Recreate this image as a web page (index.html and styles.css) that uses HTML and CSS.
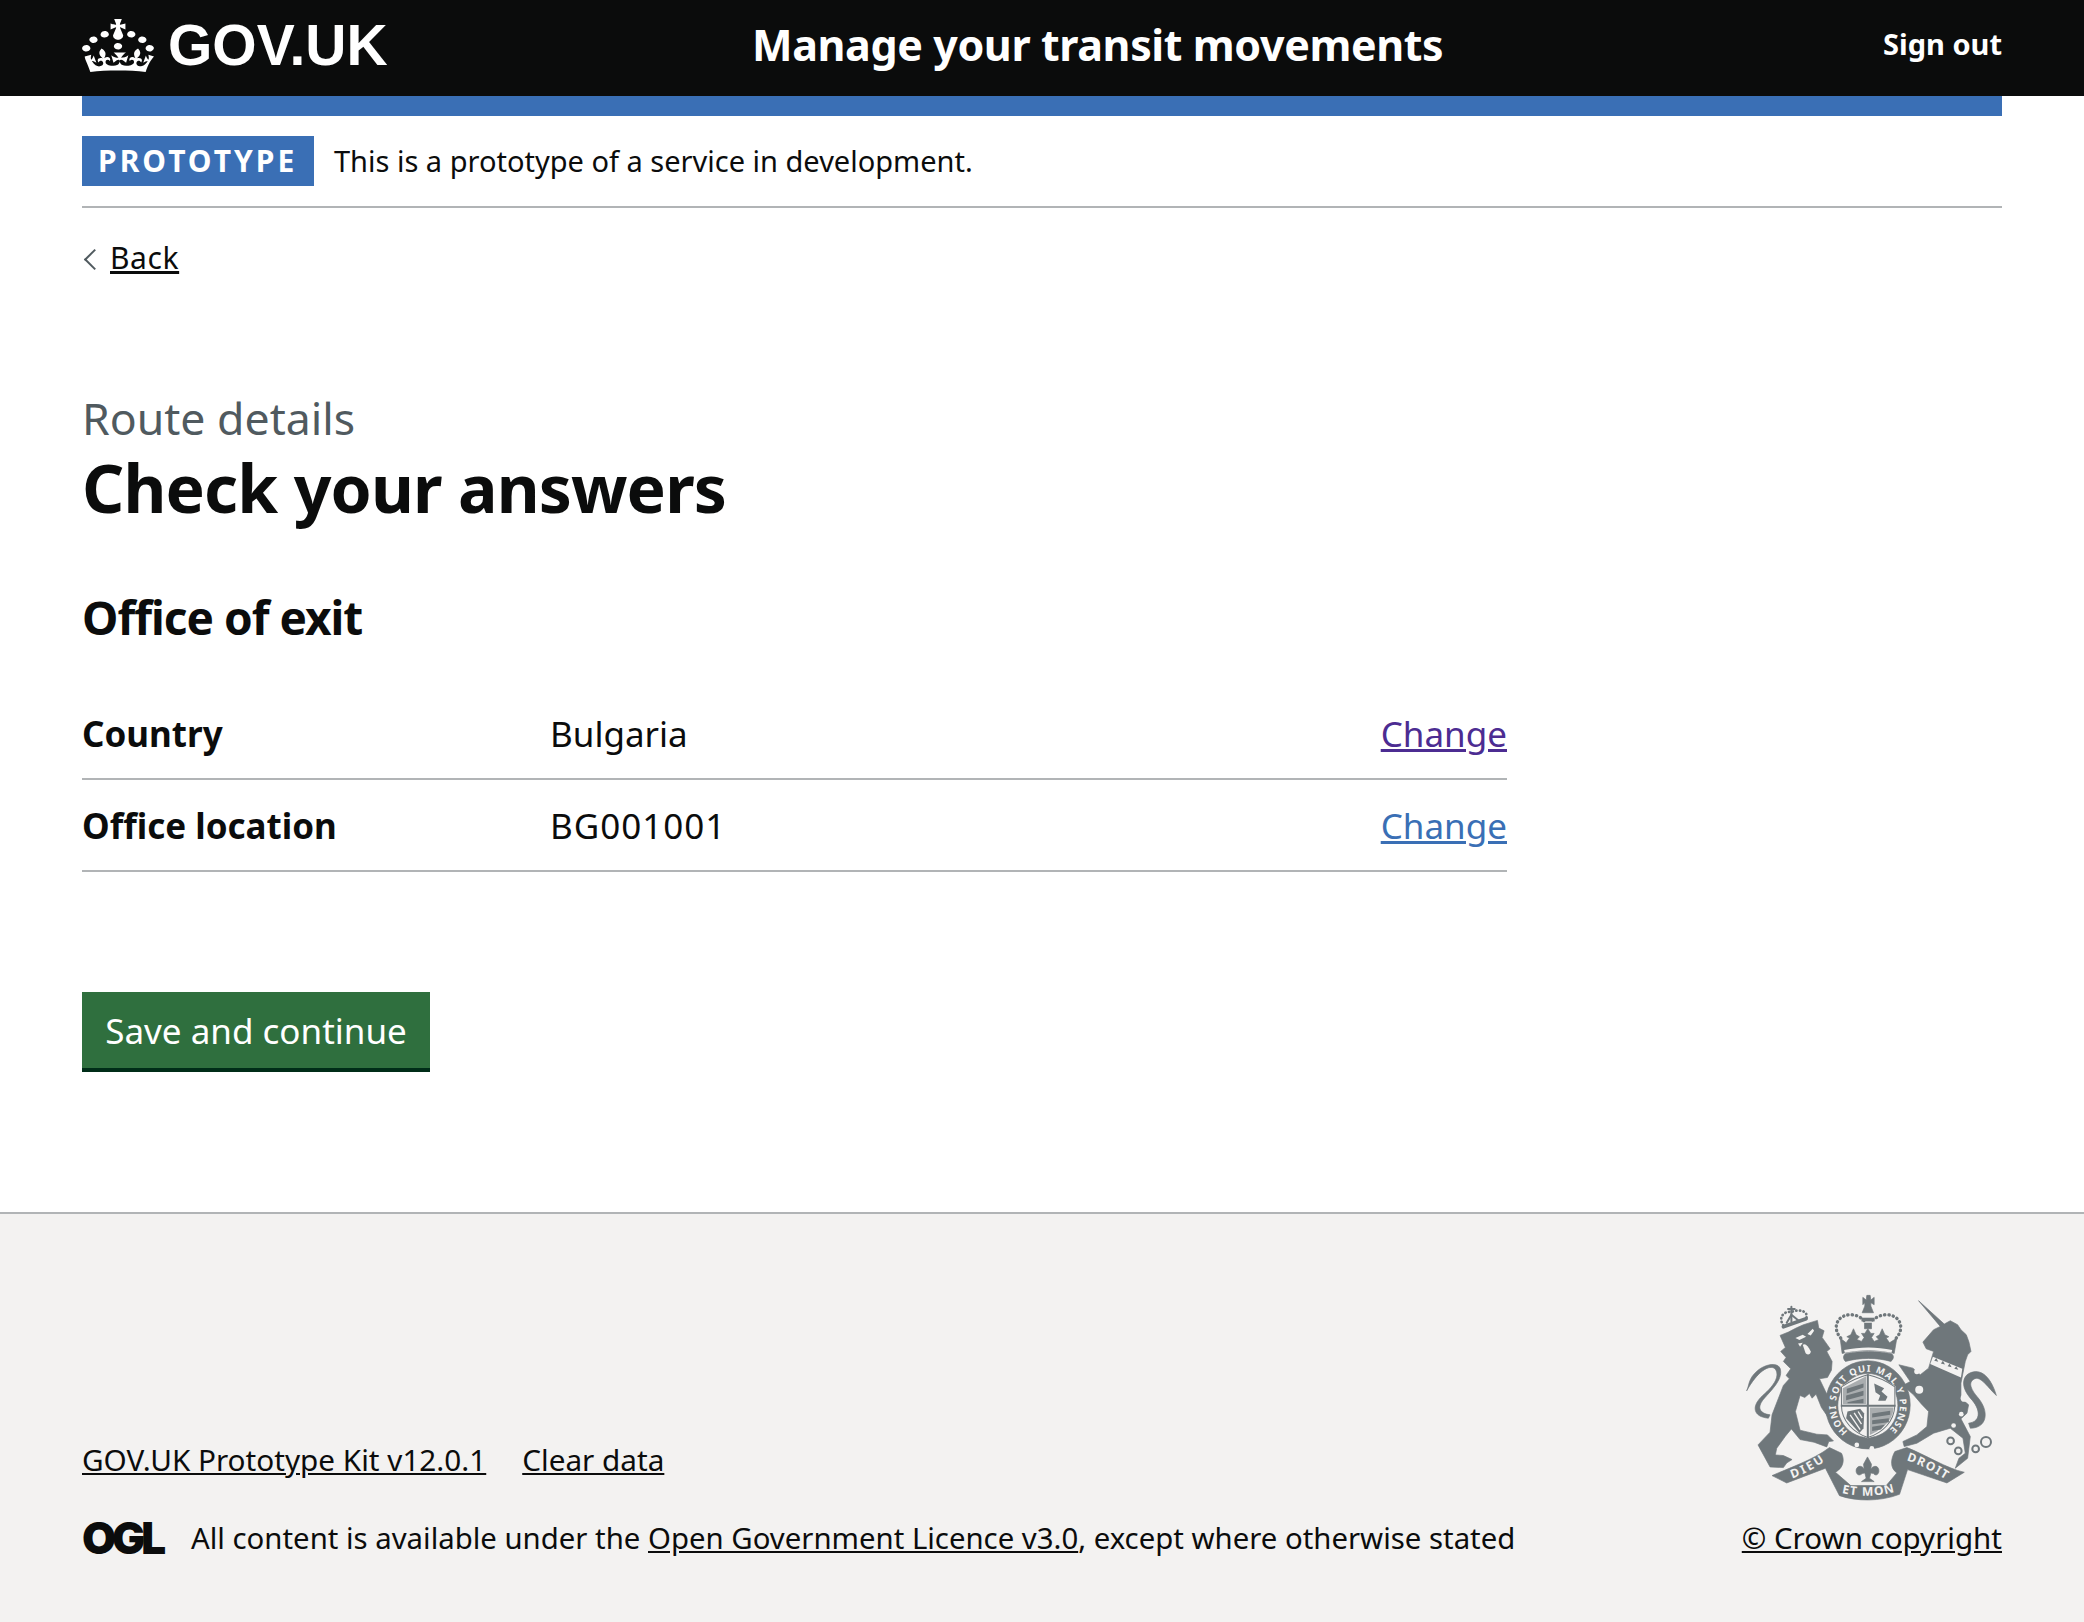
FILE: index.html
```html
<!DOCTYPE html>
<html lang="en">
<head>
<meta charset="utf-8">
<title>Check your answers</title>
<link rel="stylesheet" href="styles.css">
</head>
<body>
<header class="site-header">
  <a class="logo" href="#">
    <svg class="crown" viewBox="0 0 32 30" preserveAspectRatio="none" aria-hidden="true"><path fill="currentColor" fill-rule="evenodd" d="M22.6 10.4c-1 .4-2-.1-2.4-1-.4-.9.1-2 1-2.4.9-.4 2 .1 2.4 1s-.1 2-1 2.4m-5.9 6.7c-.9.4-2-.1-2.4-1-.4-.9.1-2 1-2.4.9-.4 2 .1 2.4 1s-.1 2-1 2.4m10.8-3.7c-1 .4-2-.1-2.4-1-.4-.9.1-2 1-2.4.9-.4 2 .1 2.4 1s0 2-1 2.4m3.3 4.8c-1 .4-2-.1-2.4-1-.4-.9.1-2 1-2.4.9-.4 2 .1 2.4 1s-.1 2-1 2.4M17 4.7l2.3 1.2V2.5l-2.3.7-.2-.2.9-3h-3.4l.9 3-.2.2c-.1.1-2.3-.7-2.3-.7v3.4L15 4.7c.1.1.1.2.2.2l-1.3 4c-.1.2-.1.4-.1.6 0 1.1.8 2 1.9 2.2h.7c1-.2 1.9-1.1 1.9-2.2 0-.2 0-.4-.1-.6l-1.3-4c-.1-.1 0-.2.1-.2m-7.6 5.7c.9.4 2-.1 2.4-1 .4-.9-.1-2-1-2.4-.9-.4-2 .1-2.4 1s0 2 1 2.4m-5 3c.9.4 2-.1 2.4-1 .4-.9-.1-2-1-2.4-.9-.4-2 .1-2.4 1s.1 2 1 2.4m-3.2 4.8c.9.4 2-.1 2.4-1 .4-.9-.1-2-1-2.4-.9-.4-2 .1-2.4 1s0 2 1 2.4m14.8 11c4.4 0 8.6.3 12.3.8 1.1-4.5 2.4-7 3.7-8.8l-2.5-.9c.2 1.3.3 1.9 0 2.7-.4-.4-.8-1.1-1.1-2.3l-1.2 4c.7-.5 1.3-.8 2-.9-1.1 2.5-2.6 3.1-3.5 3-1.1-.2-1.7-1.2-1.5-2.1.3-1.2 1.5-1.5 2.1-.1 1.1-2.3-.8-3-2-2.3 1.9-1.9 2.1-3.5.6-5.6-2.1 1.6-2.1 3.2-1.2 5.5-1.2-1.4-3.2-.6-2.5 1.6.9-1.4 2.1-.5 1.9.8-.2 1.1-1.7 2.1-3.5 1.9-2.7-.2-2.9-2.1-2.9-3.6.7-.1 1.9.5 2.9 1.9l1-4.3c-1.1 1.1-2.1 1.4-3.2 1.4.4-1.2 2.1-3 2.1-3h-5.4s1.7 1.9 2.1 3c-1.1 0-2.1-.2-3.2-1.4l1 4.3c1-1.4 2.2-2 2.9-1.9-.1 1.5-.2 3.4-2.9 3.6-1.9.2-3.4-.8-3.5-1.9-.2-1.3 1-2.2 1.9-.8.7-2.3-1.2-3-2.5-1.6.9-2.2.9-3.9-1.2-5.5-1.5 2-1.3 3.7.6 5.6-1.2-.7-3.1 0-2 2.3.6-1.4 1.8-1.1 2.1.1.2.9-.3 1.9-1.5 2.1-.9.2-2.4-.5-3.5-3 .6 0 1.2.3 2 .9l-1.2-4c-.3 1.1-.7 1.9-1.1 2.3-.3-.8-.2-1.4 0-2.7l-2.9.9C1.3 23 2.6 25.5 3.7 30c3.7-.5 7.9-.8 12.3-.8"/></svg>
    <span class="logo-text">GOV.UK</span>
  </a>
  <a class="service-name" href="#">Manage your transit movements</a>
  <a class="sign-out" href="#">Sign out</a>
</header>
<div class="wrap">
  <div class="blue-bar"></div>
  <div class="phase">
    <strong class="tag">PROTOTYPE</strong>
    <span class="phase-text">This is a prototype of a service in development.</span>
  </div>
  <a class="back" href="#">Back</a>
  <main class="main">
    <span class="caption">Route details</span>
    <h1 class="title">Check your answers</h1>
    <h2 class="subtitle">Office of exit</h2>
    <dl class="summary">
      <div class="row">
        <dt class="key">Country</dt>
        <dd class="value">Bulgaria</dd>
        <dd class="action"><a class="visited" href="#">Change</a></dd>
      </div>
      <div class="row">
        <dt class="key">Office location</dt>
        <dd class="value value-code">BG001001</dd>
        <dd class="action"><a class="link" href="#">Change</a></dd>
      </div>
    </dl>
    <button class="button" type="button">Save and continue</button>
  </main>
</div>
<footer class="footer">
  <div class="footer-inner">
    <div class="footer-meta">
      <ul class="footer-links">
        <li><a href="#">GOV.UK Prototype Kit v12.0.1</a></li>
        <li><a href="#">Clear data</a></li>
      </ul>
      <div class="licence">
        <span class="ogl">OGL</span>
        <span>All content is available under the <a href="#">Open Government Licence v3.0</a>, except where otherwise stated</span>
      </div>
    </div>
    <div class="copyright">
      <svg class="crest" viewBox="78 68 752 620" aria-hidden="true">
        <defs>
          <path id="garter" d="M383 479 A96 100 0 1 1 503 479"/>
          <path id="rib-l" d="M212 622 C245 612 285 590 318 566"/>
          <path id="rib-m" d="M358 662 C410 676 480 676 530 658"/>
          <path id="rib-r" d="M556 566 C590 575 640 600 682 628"/>
        </defs>
        <g fill="#6f777b" stroke="#6f777b" stroke-width="2" stroke-linejoin="round">
          <!-- lion -->
          <path d="M180 192 L205 182 L228 170 L250 160 L292 147 L296 170 L312 178 L306 198 L330 232 L320 240 L336 270 L334 296 L322 318 L298 322 L322 372 L350 408 L340 424 L322 434 L304 408 L288 368 L276 380 L268 366 L254 378 L240 372 L226 420 L240 476 L290 488 L322 490 L340 508 L326 510 L320 526 L282 512 L240 504 L214 472 L196 494 L170 530 L166 550 L190 552 L216 564 L200 574 L190 588 L150 586 L114 520 L150 482 L156 430 L190 342 L208 322 L198 312 L212 292 L190 270 L198 258 L182 240 L196 228Z"/>
          <path d="M145 440 C100 436 92 405 128 372 C165 340 180 312 165 292 C148 278 112 300 80 358 C88 342 84 322 112 298 C132 280 170 270 180 290 C190 320 160 350 135 378 C110 405 115 425 150 430Z"/>
          <!-- unicorn -->
          <path d="M595 88 L672 158 L690 148 L712 160 L722 175 L738 190 L746 212 L752 240 L742 250 L735 270 L722 335 L722 380 L745 400 L740 425 L722 442 L750 495 L742 560 L705 590 L716 560 L735 545 L728 500 L690 470 L640 485 L590 515 L552 525 L548 510 L590 490 L620 465 L625 420 L604 398 L580 370 L548 342 L570 330 L536 280 L578 290 L600 310 L625 290 L640 240 L618 232 L608 212 L640 175 L660 165Z"/>
          <path d="M740 310 C775 285 810 310 828 372 C800 345 790 325 770 320 C745 325 745 345 770 375 C810 420 800 470 750 470 L745 455 C785 450 780 410 750 380 C725 350 725 325 740 310Z"/>
          <!-- royal crown -->
          <path d="M428 78 L438 86 L440 72 L450 72 L452 86 L462 78 L462 100 L452 94 L452 104 L460 124 L426 124 L434 104 L434 94 L428 100Z"/>
          <path d="M425 140 H462 V150 H454 V172 H433 V150 H425Z"/>
          <path d="M360 200 L378 214 L388 200 L380 196 L392 190 L400 172 L408 190 L418 196 L410 204 L424 210 L432 198 L424 186 L434 186 L443 172 L452 186 L462 186 L454 198 L462 210 L476 204 L468 196 L478 190 L486 172 L494 190 L506 196 L498 200 L508 214 L530 200 L522 246 C480 234 410 234 366 246Z"/>
          <path d="M378 246 C420 238 470 238 512 246 C522 250 522 262 512 270 C470 258 420 258 376 270 C368 262 368 250 378 246Z"/>
          <!-- garter -->
          <path fill-rule="evenodd" d="M443 268 A127 132 0 1 1 442.9 268Z M443 306 A90 96 0 1 0 443.1 306Z"/>
          <!-- ribbon -->
          <path d="M156 612 C200 592 280 565 328 528 L364 545 C372 560 374 586 346 602 L392 642 L498 642 L530 604 C510 590 510 565 524 540 L560 528 C612 548 682 592 732 602 L680 634 L562 594 L538 668 C480 690 410 690 358 672 L316 590 L200 634Z"/>
          <!-- fleur-de-lis -->
          <path d="M442 556 L454 578 L452 592 C462 578 478 584 476 600 C474 612 464 612 460 606 L452 604 L448 620 L462 630 L424 630 L438 620 L434 604 L426 606 C420 612 410 612 408 600 C406 584 424 578 432 592 L430 578Z"/>
        </g>
        <g fill="#f3f2f1">
          <!-- lion face -->
          <path d="M248 220 C256 214 264 224 272 240 C272 250 260 252 256 244Z"/>
          <path d="M226 200 L248 190 L258 196 L238 206Z M262 188 L278 172 L282 178 L272 192Z"/>
          <path d="M234 216 L248 214 L240 226Z"/>
          <!-- unicorn collar and chain -->
          <path d="M638 256 L726 292 L722 318 L630 278Z"/>
          <circle cx="609" cy="272" r="11"/>
          <circle cx="590" cy="300" r="8"/>
          <circle cx="597" cy="355" r="12"/>
          <circle cx="732" cy="380" r="11"/>
          <circle cx="723" cy="428" r="7"/>
          <circle cx="700" cy="462" r="7"/>
          <path d="M372 236 C420 226 470 226 516 236 L514 244 C470 234 420 234 374 244Z"/>
          <path d="M424 150 H462 V154 H424Z"/>
        </g>
        <g fill="#6f777b">
          <path d="M642 268 l6 -8 l6 11Z M662 276 l6 -8 l6 11Z M682 284 l6 -8 l6 11Z M702 292 l6 -8 l6 11Z"/>
        </g>
        <g fill="#f3f2f1" stroke="#6f777b" stroke-width="6">
          <circle cx="691" cy="508" r="10"/>
          <circle cx="714" cy="538" r="10"/>
          <circle cx="766" cy="532" r="10"/>
          <circle cx="797" cy="511" r="15"/>
        </g>
        <g fill="none" stroke="#6f777b" stroke-linecap="round">
          <path stroke-width="10" stroke-dasharray="1 12" d="M362 200 C335 170 350 130 392 130 C410 130 425 140 432 148 M528 200 C555 170 540 130 498 130 C480 130 465 140 454 148"/>
          <path stroke-width="8" stroke-dasharray="1 10" d="M190 162 C172 135 195 118 214 122 C235 112 268 118 258 142"/>
          <path stroke-width="11" d="M190 166 L258 142"/>
          <path stroke-width="6" d="M214 150 V106 M204 113 H224"/>
          <path stroke-width="6" d="M214 130 L200 154 M214 130 L236 148"/>
        </g>
        <!-- shield -->
        <path fill="#f3f2f1" d="M362 344 C392 326 420 314 443 308 C470 314 498 326 526 344 L526 402 C524 450 488 486 443 500 C402 486 362 450 362 402Z"/>
        <g fill="#a9adaf">
          <path d="M368 350 L438 314 V398 H368Z M449 408 H520 C520 445 485 476 449 490Z"/>
        </g>
        <g fill="#6f777b">
          <path d="M380 352 L430 336 V348 L380 366Z M378 372 L430 358 V372 L378 386Z M382 392 L430 382 V395 H382Z"/>
          <path d="M456 426 L510 418 V430 L456 438Z M456 446 L506 440 V452 L456 458Z M456 466 L494 460 L482 474 L456 478Z"/>
          <!-- rampant lion -->
          <path d="M462 336 L492 350 L484 360 L502 376 L496 388 L474 388 L480 372 L466 362Z"/>
          <!-- harp -->
          <path d="M382 420 L420 412 L432 426 L430 470 L418 484 L378 440Z"/>
        </g>
        <path stroke="#f3f2f1" stroke-width="4" fill="none" d="M390 430 L420 474 M402 424 L424 458 M414 420 L426 440"/>
        <path fill="none" stroke="#6f777b" stroke-width="6" d="M443 308 V500 M362 403 H526"/>
        <path fill="none" stroke="#6f777b" stroke-width="3" d="M364 346 C392 328 420 316 443 310 C470 316 498 328 524 346 L524 402 C522 450 488 484 443 498 C402 484 364 450 364 402Z"/>
        <g fill="#f3f2f1">
          <circle cx="410" cy="520" r="7"/>
          <circle cx="455" cy="530" r="7"/>
        </g>
        <g class="crest-text">
          <text class="garter-text"><textPath href="#garter" textLength="478">HONI SOIT QUI MAL Y PENSE</textPath></text>
          <text><textPath href="#rib-l" startOffset="4%" textLength="110">DIEU</textPath></text>
          <text><textPath href="#rib-m" startOffset="4%" textLength="160">ET MON</textPath></text>
          <text><textPath href="#rib-r" startOffset="2%" textLength="130">DROIT</textPath></text>
        </g>
      </svg>
      <a class="crown-copy" href="#">© Crown copyright</a>
    </div>
  </div>
</footer>
</body>
</html>
```
FILE: styles.css
```css
* { box-sizing: border-box; }
html, body { margin: 0; padding: 0; }
body {
  font-family: "Noto Sans", "Liberation Sans", sans-serif;
  font-size: 35px;
  color: #0b0c0c;
  background: #fff;
}
a { color: inherit; }

.site-header {
  height: 96px;
  background: #0b0c0c;
  color: #fff;
  padding: 0 82px 6px;
  display: grid;
  grid-template-columns: 670px 1fr auto;
  align-items: center;
}
.site-header a { color: #fff; text-decoration: none; }
.logo { display: flex; align-items: center; gap: 14px; }
.crown { width: 72px; height: 53px; display: block; }
.logo-text {
  font-family: "Liberation Sans", sans-serif;
  font-weight: 700;
  font-size: 57px;
  line-height: 1;
}
.service-name { font-weight: 700; font-size: 43px; letter-spacing: -0.4px; line-height: 1; margin-bottom: 2px; }
.sign-out { font-weight: 700; font-size: 29px; line-height: 1; margin-bottom: 4px; }

.wrap { padding: 0 82px; }
.blue-bar { height: 20px; background: #3a6fb5; }
.phase {
  display: flex;
  align-items: center;
  gap: 20px;
  padding: 20px 0;
  height: 92px;
  border-bottom: 2px solid #b1b4b6;
  font-size: 29px;
}
.tag {
  background: #3a6fb5;
  color: #fff;
  font-size: 30px;
  letter-spacing: 3px;
  line-height: 50px;
  height: 50px;
  width: 232px;
  padding: 0 16px;
}
.phase-text { margin-bottom: 1px; }
.back {
  display: inline-block;
  margin-top: 30px;
  padding-left: 28px;
  font-size: 30px;
  letter-spacing: 0.6px;
  line-height: 40px;
  position: relative;
}
.back::before {
  content: "";
  position: absolute;
  left: 5px;
  top: 14px;
  width: 13px;
  height: 13px;
  border-left: 2px solid #505a5f;
  border-bottom: 2px solid #505a5f;
  transform: rotate(45deg);
}
.main { padding-top: 111px; padding-bottom: 140px; }
.caption {
  display: block;
  color: #505a5f;
  font-size: 44.6px;
  line-height: 56px;
}
.title {
  margin: 1px 0 62px;
  font-size: 66px;
  letter-spacing: -0.85px;
  line-height: 80px;
  font-weight: 700;
}
.subtitle {
  margin: 0 0 43px;
  font-size: 46px;
  letter-spacing: -1px;
  line-height: 56px;
  font-weight: 700;
}
.summary { margin: 0 0 120px; width: 1425px; }
.row {
  display: grid;
  grid-template-columns: 468px 1fr auto;
  align-items: center;
  height: 92px;
  border-bottom: 2px solid #b1b4b6;
}
.key { font-weight: 700; }
.value, .action { margin: 0; }
.value-code { letter-spacing: 1px; }
.visited { color: #4c2c92; }
.link { color: #3a6fb5; }
.button {
  display: block;
  width: 348px;
  height: 80px;
  border: 0;
  border-bottom: 4px solid #002d18;
  background: #2f6f3e;
  color: #fff;
  font: inherit;
  padding: 0;
}
.footer {
  background: #f3f2f1;
  border-top: 2px solid #b1b4b6;
  padding: 80px 82px 48px;
  height: 410px;
}
.footer-inner {
  display: flex;
  justify-content: space-between;
  align-items: flex-end;
  font-size: 29.35px;
}
.footer-links {
  list-style: none;
  margin: 0 0 38px;
  padding: 0;
  display: flex;
  gap: 36px;
  font-size: 29.7px;
}
.licence { display: flex; align-items: center; gap: 27px; }
.ogl {
  font-family: "Inter", sans-serif;
  font-weight: 900;
  font-size: 44px;
  line-height: 40px;
  letter-spacing: -4px;
  width: 82px;
}
.copyright {
  display: flex;
  flex-direction: column;
  align-items: flex-end;
  gap: 16px;
}
.crown-copy { font-size: 29.5px; }
.crest { width: 251px; height: 207px; display: block; margin-right: 5px; }
.crest-text text {
  fill: #f3f2f1;
  font-family: "Noto Sans", sans-serif;
  font-weight: 700;
  font-size: 36px;
}
.crest-text .garter-text { font-size: 28px; }
```
